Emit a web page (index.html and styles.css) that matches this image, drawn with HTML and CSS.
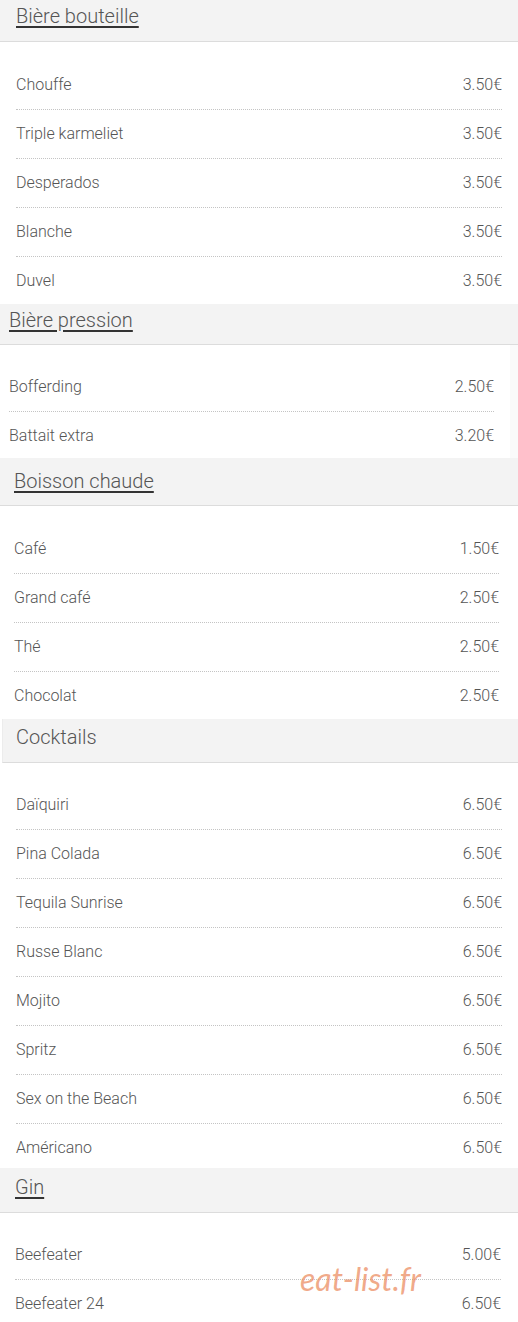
FILE: index.html
```html
<!DOCTYPE html>
<html lang="fr">
<head>
    <meta charset="UTF-8">
    <meta name="viewport" content="width=device-width, initial-scale=1.0">
    <title>Carte des boissons</title>
    <link rel="stylesheet" href="styles.css">
</head>
<body>
    <div class="menu">
        <section class="category cat-bouteille">
            <h2 class="cat-title"><u>Bière bouteille</u></h2>
            <ul class="items">
                <li><span>Chouffe</span><span>3.50€</span></li>
                <li><span>Triple karmeliet</span><span>3.50€</span></li>
                <li><span>Desperados</span><span>3.50€</span></li>
                <li><span>Blanche</span><span>3.50€</span></li>
                <li><span>Duvel</span><span>3.50€</span></li>
            </ul>
        </section>

        <section class="category cat-pression">
            <h2 class="cat-title"><u>Bière pression</u></h2>
            <ul class="items">
                <li><span>Bofferding</span><span>2.50€</span></li>
                <li><span>Battait extra</span><span>3.20€</span></li>
            </ul>
        </section>

        <section class="category cat-chaude">
            <h2 class="cat-title"><u>Boisson chaude</u></h2>
            <ul class="items">
                <li><span>Café</span><span>1.50€</span></li>
                <li><span>Grand café</span><span>2.50€</span></li>
                <li><span>Thé</span><span>2.50€</span></li>
                <li><span>Chocolat</span><span>2.50€</span></li>
            </ul>
        </section>

        <section class="category cat-cocktails">
            <h2 class="cat-title">Cocktails</h2>
            <ul class="items">
                <li><span>Daïquiri</span><span>6.50€</span></li>
                <li><span>Pina Colada</span><span>6.50€</span></li>
                <li><span>Tequila Sunrise</span><span>6.50€</span></li>
                <li><span>Russe Blanc</span><span>6.50€</span></li>
                <li><span>Mojito</span><span>6.50€</span></li>
                <li><span>Spritz</span><span>6.50€</span></li>
                <li><span>Sex on the Beach</span><span>6.50€</span></li>
                <li><span>Américano</span><span>6.50€</span></li>
            </ul>
        </section>

        <section class="category cat-gin">
            <h2 class="cat-title"><u>Gin</u></h2>
            <ul class="items">
                <li><span>Beefeater</span><span>5.00€</span></li>
                <li><span>Beefeater 24</span><span>6.50€</span></li>
            </ul>
            <div class="watermark">eat-list.fr</div>
        </section>
    </div>
</body>
</html>
```

FILE: styles.css
```css
body {
    margin: 0;
    padding: 0;
    background: #fff;
    font-family: 'Roboto', 'Liberation Sans', sans-serif;
    font-weight: 300;
    color: #555;
}
.menu {
    width: 518px;
    display: flex;
    flex-direction: column;
}
.category {
    position: relative;
    display: flex;
    flex-direction: column;
}
.cat-title {
    margin: 0;
    background-color: #f3f3f3;
    border-bottom: 1px solid #dcdcdc;
    font-weight: 300;
    font-size: 20px;
    color: #555;
    box-sizing: border-box;
}
.cat-title u {
    text-decoration-color: #333;
    text-decoration-thickness: 2px;
    text-underline-offset: 3px;
}
.items {
    list-style: none;
    margin: 0;
    padding: 0;
}
.items li {
    display: flex;
    justify-content: space-between;
    height: 48px;
    line-height: 48px;
    font-size: 16px;
    color: #555;
    border-bottom: 1px dotted #c4c4c4;
}
.items li:last-child {
    border-bottom: none;
}

/* Bière bouteille */
.cat-bouteille .cat-title {
    height: 42px;
    line-height: 32px;
    padding-left: 16px;
}
.cat-bouteille .items {
    padding: 19px 16px 0 16px;
}
.cat-bouteille .items li:last-child {
    height: 47px;
}

/* Bière pression */
.cat-pression {
    background: #fafafa;
}
.cat-pression .cat-title {
    height: 41px;
    line-height: 32px;
    padding-left: 9px;
}
.cat-pression .items {
    padding: 18px 16px 0 9px;
    margin-right: 8px;
    background: #fff;
}
.cat-pression .items li:last-child {
    height: 46px;
}

/* Boisson chaude */
.cat-chaude .cat-title {
    height: 48px;
    line-height: 46px;
    padding-left: 14px;
}
.cat-chaude .items {
    padding: 19px 19px 0 14px;
}
.cat-chaude .items li:last-child {
    height: 47px;
}

/* Cocktails */
.cat-cocktails .cat-title {
    height: 44px;
    line-height: 36px;
    margin-left: 2px;
    padding-left: 13px;
    border-left: 1px solid #ececec;
}
.cat-cocktails .items {
    padding: 18px 16px 0 16px;
}
.cat-cocktails .items li:last-child {
    height: 44px;
}

/* Gin */
.cat-gin .cat-title {
    height: 45px;
    line-height: 38px;
    padding-left: 15px;
}
.cat-gin .items {
    padding: 18px 17px 0 15px;
}

.watermark {
    position: absolute;
    left: 300px;
    top: 91px;
    font-family: 'Lato', 'Open Sans', sans-serif;
    font-style: italic;
    font-weight: 400;
    font-size: 32px;
    color: rgba(236, 142, 100, 0.75);
    pointer-events: none;
}
```
